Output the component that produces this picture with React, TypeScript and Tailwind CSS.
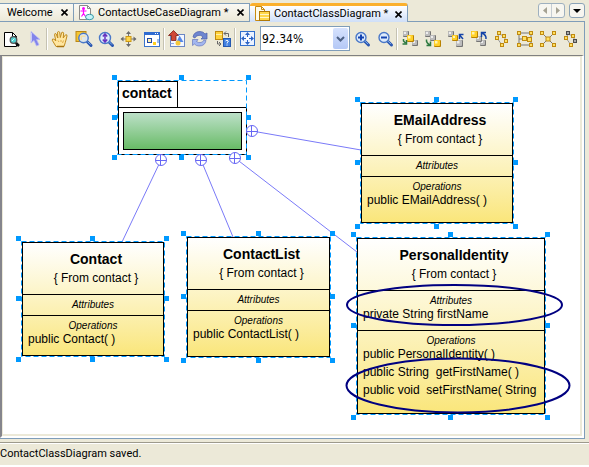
import React from "react";

const ui = "font-['Roboto','DejaVu_Sans',sans-serif] text-[11px]";
const HANDLE = "#0099ff";

/* ---------- toolbar icons ---------- */

function Icon({ children }: { children: React.ReactNode }) {
  return (
    <svg width="23" height="23" viewBox="0 0 23 23" fill="none" aria-hidden="true">
      {children}
    </svg>
  );
}

function Lens({ x, y, r = 5 }: { x: number; y: number; r?: number }) {
  return (
    <>
      <path d={`M${x + 4} ${y + 4}L${x + 7.5} ${y + 7.5}`} stroke="#2a56b0" strokeWidth="3" strokeLinecap="round" />
      <path d={`M${x + 4} ${y + 3.6}L${x + 7} ${y + 6.6}`} stroke="#7fb0ee" strokeWidth="1" />
      <circle cx={x} cy={y} r={r} fill="#dcebff" fillOpacity="0.9" stroke="#4a78c8" strokeWidth="1.4" />
    </>
  );
}

function Block({ x, y, gold = false, s = 7 }: { x: number; y: number; gold?: boolean; s?: number }) {
  return (
    <>
      <rect x={x} y={y} width={s} height={s} rx="1" fill={gold ? "#b98200" : "#747474"} />
      <rect x={x} y={y} width={s - 1} height={s - 1} rx="1" fill={gold ? "#ffd028" : "#bcbcbc"} />
      <rect x={x + 1} y={y + 1} width={s / 2 - 1} height={s / 2 - 1} fill={gold ? "#fff3b0" : "#ededed"} />
    </>
  );
}

function Dot({ x, y, gray = false }: { x: number; y: number; gray?: boolean }) {
  return (
    <rect x={x - 1.5} y={y - 1.5} width="3" height="3" fill={gray ? "#a8a8a8" : "#ffe060"} stroke={gray ? "#4c4c4c" : "#c08a10"} />
  );
}

function Chain({ gray = false }: { gray?: boolean }) {
  return (
    <Icon>
      <path d="M9 7L14 9L16 14L12 18L7 11Z" stroke="#9a9a9a" />
      <Dot x={9} y={6} gray={gray} />
      <Dot x={14} y={9} />
      <Dot x={7} y={11} />
      <Dot x={16} y={14} gray={gray} />
      <Dot x={12} y={18} />
    </Icon>
  );
}

const icons = {
  find: (
    <Icon>
      <path d="M4.500 5.500H12.500L16.500 9.500V19.500H4.500Z" fill="#fff" stroke="#000" />
      <path d="M12.500 5.500V9.500H16.500" stroke="#000" />
      <path d="M15.500 15.500L19 19" stroke="#111" strokeWidth="2.500" />
      <circle cx="13.500" cy="13" r="3.300" fill="#4fd0d0" stroke="#555" strokeWidth="1.300" />
      <path d="M12 14L14.500 11.500" stroke="#d8ffff" />
    </Icon>
  ),
  cursor: (
    <Icon>
      <path d="M8 4.500V16L11 13.500L13.500 19L16 17.800L13.500 12.500H17Z" fill="#8284ea" stroke="#b9b9f5" strokeWidth="0.800" />
      <path d="M8.500 6V14.500" stroke="#c9c9fa" />
    </Icon>
  ),
  hand: (
    <Icon>
      <path
        d="M8 19.500L4.300 13.300Q4 11.500 5.800 12L7.800 14L6.500 7.500Q6.800 5.700 8.200 7L9.800 11L9.500 5.200Q10.500 3.800 11.700 5.200L12.300 10.500L13.700 5.500Q15 4.500 15.700 6L15.200 11L17.500 7.800Q19.200 7.200 19 9L17.300 15.500L16 19.500Z"
        fill="#ffe6a0"
        stroke="#c08a1c"
      />
      <path d="M9 19.500H16" stroke="#a87410" strokeWidth="1.500" />
      <path d="M10 13.500L11 15M13 13V15M15.500 13.500L14.500 16" stroke="#e0ac48" />
    </Icon>
  ),
  zoomArea: (
    <Icon>
      <rect x="5" y="4.500" width="10" height="10" fill="#f4c430" stroke="#bb8716" />
      <Lens x={12.5} y={11} r={4.7} />
      <path d="M9.500 8.500H14.500V10H11V13H9.500Z" fill="#f6dda0" />
    </Icon>
  ),
  zoomFit: (
    <Icon>
      <Lens x={11} y={11} r={5.5} />
      <path d="M11 7V15M8.800 9.500L11 7L13.200 9.500M8.800 12.500L11 15L13.200 12.500" stroke="#6633c0" strokeWidth="1.500" />
    </Icon>
  ),
  pan: (
    <Icon>
      <path d="M11.500 5V19M4.500 12H18.500" stroke="#777" />
      <path d="M11.500 4L14 7H9ZM11.500 20L14 17H9ZM3.500 12L6.500 9.500V14.500ZM19.500 12L16.500 9.500V14.500Z" fill="#6b6b6b" />
      <rect x="9" y="9.500" width="5" height="5" fill="#ffd64a" stroke="#cf9a12" />
    </Icon>
  ),
  overview: (
    <Icon>
      <rect x="4.500" y="5.500" width="15" height="14" fill="#fff" stroke="#3a74cc" />
      <rect x="4" y="5" width="16" height="3" fill="#2f6bd0" />
      <path d="M15 6.500H16M17 6.500H18" stroke="#fff" />
      <rect x="7.500" y="11.500" width="4" height="4" fill="#fff2b0" stroke="#2048a8" />
      <rect x="13" y="15" width="3" height="3" fill="#ffd020" />
      <rect x="17" y="12" width="2" height="4" fill="#a0bce8" />
    </Icon>
  ),
  image: (
    <Icon>
      <rect x="5.500" y="7.500" width="14" height="12" fill="#f4f7ff" stroke="#6b87c4" />
      <path d="M14.500 8.500L18.500 15H11.500Z" fill="#5488e8" />
      <circle cx="13" cy="16" r="2.500" fill="#f5c83c" />
      <path d="M8.500 3.500L13.500 8.500H11V13.500H6.500V8.500H3.500Z" fill="#d04838" stroke="#7c2018" strokeWidth="0.800" />
      <path d="M5.500 16.500H9" stroke="#8eaae4" />
    </Icon>
  ),
  refresh: (
    <Icon>
      <path d="M5 10Q6 4.500 12 4.500Q15.500 4.500 17 7L19 6V12H13L15 10Q13 7.500 10 8.500Q7.500 9 7 11Z" fill="#6e86d0" stroke="#4a5ca8" strokeWidth="0.700" />
      <path d="M18 13.500Q17 19 11 19Q8 19 6.500 17L4.500 18.500V12.500H10L8.500 14.500Q10.500 16 13 15.500Q15 15 16 13Z" fill="#a3b7ef" stroke="#6879bd" strokeWidth="0.700" />
    </Icon>
  ),
  swap: (
    <Icon>
      <rect x="4.500" y="4.500" width="7" height="8" fill="#ffd23c" stroke="#c08a10" />
      <path d="M5 7.500H11" stroke="#fff0a8" />
      <path d="M13 6.500H17.500V10M15 4.500L13 6.500L15 8.500M10 17H6.500V14M8 15L10 17L8 19" stroke="#666" />
      <rect x="12.500" y="11.500" width="7" height="8" fill="#3f7fe0" stroke="#2458b0" />
      <path d="M14.500 14Q16 12.500 17.300 14Q17.300 15 16 15.800V16.500M16 17.500V18.500" stroke="#fff" />
    </Icon>
  ),
  fit: (
    <Icon>
      <rect x="4.500" y="4.500" width="14" height="14" fill="#eaf2ff" stroke="#3270cc" />
      <path d="M11.500 6V17M6 11.500H17" stroke="#2c64c4" />
      <path d="M11.500 5L14 8H9ZM11.500 18L14 15H9ZM5 11.500L8 9V14ZM18 11.500L15 9V14Z" fill="#2c64c4" />
      <rect x="10" y="10" width="3" height="3" fill="#fff" />
    </Icon>
  ),
  zoomIn: (
    <Icon>
      <Lens x={11} y={10.5} />
      <path d="M11 7.500V13.500M8 10.500H14" stroke="#1444b0" strokeWidth="2" />
    </Icon>
  ),
  zoomOut: (
    <Icon>
      <Lens x={11} y={10.5} />
      <path d="M8 10.500H14" stroke="#1444b0" strokeWidth="2" />
    </Icon>
  ),
  forward: (
    <Icon>
      <Block x={5} y={4} s={6} />
      <Block x={14} y={13} s={6} />
      <Block x={9} y={8} gold />
      <path d="M5.500 12V14L7.500 16M8.500 13V17H4.500" stroke="#2d7a40" strokeWidth="1.500" />
    </Icon>
  ),
  front: (
    <Icon>
      <Block x={4} y={4} s={6} />
      <Block x={9} y={8} s={6} />
      <Block x={13} y={13} gold />
      <path d="M5.500 12.500Q5 16 9 18M9.500 14.500V18.500H5.500" stroke="#2d7a40" strokeWidth="1.500" />
    </Icon>
  ),
  backward: (
    <Icon>
      <Block x={4} y={4} s={6} />
      <Block x={12} y={13} />
      <Block x={8} y={8} gold s={6} />
      <path d="M19 12L16 8.500M15.500 12V7.500H19.500" stroke="#1444a8" strokeWidth="1.500" />
    </Icon>
  ),
  back: (
    <Icon>
      <Block x={13} y={13} s={6} />
      <Block x={9} y={9} s={6} />
      <Block x={4} y={4} gold />
      <path d="M19 12Q19.500 8 15 6M14.500 10V5.500H19" stroke="#1444a8" strokeWidth="1.500" />
    </Icon>
  ),
  chain: <Chain />,
  orthogonal: (
    <Icon>
      <path d="M6 6H18V18H6ZM6 12H16" stroke="#777" />
      <Dot x={6} y={6} />
      <Dot x={18} y={6} />
      <Dot x={6} y={18} />
      <Dot x={18} y={18} />
      <rect x="9.500" y="9.500" width="4" height="4" fill="#ffe060" stroke="#c08a10" />
      <rect x="14.500" y="10.500" width="4" height="4" fill="#ffe060" stroke="#c08a10" />
    </Icon>
  ),
  star: (
    <Icon>
      <path d="M6 6L18 18M18 6L6 18" stroke="#777" />
      <Dot x={6} y={6} />
      <Dot x={18} y={6} />
      <Dot x={6} y={18} />
      <Dot x={18} y={18} />
      <rect x="10" y="10" width="4" height="4" fill="#ffe060" stroke="#c08a10" />
    </Icon>
  ),
  chainGray: <Chain gray />,
};

type IconName = keyof typeof icons;

function Tools({ items }: { items: [IconName, string][] }) {
  return (
    <>
      {items.map(([name, label]) => (
        <button key={name} type="button" aria-label={label} className="h-[23px] w-[23px] shrink-0">
          {icons[name]}
        </button>
      ))}
    </>
  );
}

function Separator() {
  return <div className="h-[22px] w-[2px] shrink-0 border-l border-[#c5c2b2] bg-white" />;
}

/* ---------- tabs ---------- */

function Tab({ title, icon, active = false, width }: { title: string; icon?: React.ReactNode; active?: boolean; width: string }) {
  return (
    <div
      className={`flex shrink-0 items-center border-r border-[#7f9db9] pl-1 ${width} ${
        active
          ? "rounded-t-[3px] border-t-[3px] border-t-[#fbb02c] bg-linear-to-b from-white to-[#cfdff8]"
          : "border-y bg-linear-to-b from-[#faf9f4] to-[#ece9d8]"
      }`}
    >
      {icon}
      <button type="button" className="pl-[3px] leading-[16px] whitespace-pre">
        {title}
      </button>
      <button type="button" aria-label={`Close ${title}`} className="mr-[3px] ml-auto p-0.5">
        <svg width="7" height="7" viewBox="0 0 7 7" aria-hidden="true">
          <path d="M0.500 0.500L6.500 6.500M6.500 0.500L0.500 6.500" stroke="#000" strokeWidth="1.600" />
        </svg>
      </button>
    </div>
  );
}

const useCaseIcon = (
  <svg width="17" height="16" viewBox="0 0 17 16" fill="none" aria-hidden="true">
    <path d="M1.500 0.500H9.500L12.500 3.500V14.500H1.500Z" fill="#fff" stroke="#8a8a8a" />
    <path d="M9.500 0.500V3.500H12.500" stroke="#8a8a8a" />
    <circle cx="5.500" cy="3.500" r="1.500" fill="#f0f" />
    <path d="M5.500 5V8.500M2.500 6H8.500M5.500 8.500L3.500 11.500M5.500 8.500L7.500 11.500" stroke="#f0f" strokeWidth="1.200" />
    <ellipse cx="11.500" cy="12" rx="4" ry="2.700" fill="#c4f4f8" stroke="#3a9aa8" />
  </svg>
);

const classIcon = (
  <svg width="17" height="16" viewBox="0 0 17 16" fill="none" aria-hidden="true">
    <path d="M1.500 0.500H7.500L10.500 3.500V14.500H1.500Z" fill="#fffbe8" stroke="#c88a10" />
    <path d="M7.500 0.500V3.500H10.500" stroke="#c88a10" />
    <rect x="5.500" y="5.500" width="10" height="9" fill="#ffd84a" stroke="#b07a08" />
    <path d="M6 8.500H15M6 11.500H15" stroke="#fff6c8" />
  </svg>
);

/* ---------- diagram ---------- */

type Box = { x: number; y: number; w: number; h: number };
type ClassNode = Box & { name: string; attributes: string[]; operations: string[] };

const classes: ClassNode[] = [
  { name: "EMailAddress", x: 358, y: 46, w: 152, h: 120, attributes: [], operations: ["public EMailAddress( )"] },
  { name: "Contact", x: 19, y: 185, w: 142, h: 114, attributes: [], operations: ["public Contact( )"] },
  { name: "ContactList", x: 184, y: 180, w: 143, h: 120, attributes: [], operations: ["public ContactList( )"] },
  {
    name: "PersonalIdentity",
    x: 354,
    y: 181,
    w: 188,
    h: 176,
    attributes: ["private String firstName"],
    operations: ["public PersonalIdentity( )", "public String  getFirstName( )", "public void  setFirstName( String"],
  },
];

const links = [
  { cx: 249, cy: 74, x: 358, y: 93 },
  { cx: 158, cy: 103, x: 119, y: 185 },
  { cx: 198, cy: 103, x: 230, y: 180 },
  { cx: 232, cy: 101, x: 354, y: 195 },
];

const packageBox: Box = { x: 115, y: 24, w: 128, h: 73 };

function Selection({ x, y, w, h }: Box) {
  const xs = [x - 6, Math.round(x + w / 2 - 3), x + w];
  const ys = [y - 6, Math.round(y + h / 2 - 3), y + h + 1];
  return (
    <g>
      <rect x={x - 0.5} y={y - 0.5} width={w + 1} height={h + 1} fill="none" stroke={HANDLE} strokeDasharray="5 3" />
      {xs.map((hx, i) =>
        ys.map((hy, j) => (i === 1 && j === 1 ? null : <rect key={`${i}${j}`} x={hx} y={hy} width="5" height="5" fill={HANDLE} />)),
      )}
    </g>
  );
}

function Compartment({ label, members }: { label: string; members: string[] }) {
  return (
    <div className={`border-t border-black pt-1 ${members.length > 0 ? "pb-[9px]" : "pb-1"}`}>
      <h3 className="text-center text-[10px] leading-[12px] italic">{label}</h3>
      {members.length > 0 && (
        <ul className="flex flex-col gap-1 pl-[5px]">
          {members.map((m) => (
            <li key={m} className="text-[12px] leading-[14px] whitespace-pre">
              {m}
            </li>
          ))}
        </ul>
      )}
    </div>
  );
}

function ClassCard({ node }: { node: ClassNode }) {
  return (
    <article
      className="absolute overflow-hidden border border-black bg-linear-to-b from-white to-[#fae67a]"
      style={{ left: node.x, top: node.y, width: node.w, height: node.h }}
    >
      <header className="h-[51px] pt-[6px] pl-[6px] text-center">
        <h2 className="text-[14px] leading-[20px] font-bold">{node.name}</h2>
        <p className="text-[12px] leading-[18px]">{"{ From contact }"}</p>
      </header>
      <Compartment label="Attributes" members={node.attributes} />
      <Compartment label="Operations" members={node.operations} />
    </article>
  );
}

function Diagram() {
  return (
    <main className="relative flex-1 overflow-hidden bg-white font-['Liberation_Sans',Arial,sans-serif]">
      <svg className="absolute top-0 left-0" width="578" height="377" fill="none" aria-hidden="true">
        {links.map((l) => (
          <path key={l.cx} d={`M${l.cx} ${l.cy}L${l.x} ${l.y}`} stroke="#7a7af8" />
        ))}
      </svg>
      <section className="absolute top-6 left-[115px] w-[129px]">
        <h2 className="h-[26px] w-[60px] border border-b-0 border-black bg-white pl-[3px] text-[14px] leading-[22px] font-bold">contact</h2>
        <div className="h-[48px] border border-black bg-white p-1">
          <div className="h-full border border-black bg-linear-to-b from-[#bce0c8] to-[#68bb66]" />
        </div>
      </section>
      {classes.map((c) => (
        <ClassCard key={c.name} node={c} />
      ))}
      <svg className="absolute top-0 left-0" width="578" height="377" fill="none" aria-hidden="true">
        <Selection {...packageBox} />
        {classes.map((c) => (
          <Selection key={c.name} {...c} />
        ))}
        {links.map((l) => (
          <g key={l.cx} stroke="#6666f4">
            <circle cx={l.cx} cy={l.cy} r="5.500" fill="#fff" />
            <path d={`M${l.cx - 5} ${l.cy + 0.5}H${l.cx + 5}M${l.cx - 0.5} ${l.cy - 5}V${l.cy + 5}`} />
          </g>
        ))}
        <g stroke="#000080" strokeWidth="2">
          <ellipse cx="451.500" cy="248" rx="107.500" ry="20" />
          <ellipse cx="455" cy="328.500" rx="111.500" ry="27" />
        </g>
      </svg>
    </main>
  );
}

/* ---------- window ---------- */

export default function App() {
  return (
    <div className={`flex min-h-screen flex-col bg-[#ece9d8] text-black ${ui}`}>
      <nav aria-label="Open diagrams" className="flex h-[22px] pt-[3px]">
        <Tab title="Welcome" width="w-[74px]" />
        <Tab title="ContactUseCaseDiagram *" icon={useCaseIcon} width="w-[176px]" />
        <Tab title="ContactClassDiagram *" icon={classIcon} active width="w-[158px]" />
        <div className="mr-[4px] flex flex-1 items-start justify-end gap-1 border-b border-[#7f9db9]">
          <div className="flex h-[15px] rounded-[3px] border border-[#9eb0bf] bg-[#f7f6f0]">
            <button type="button" aria-label="Previous tab" className="flex w-[13px] items-center justify-center border-r border-[#c6cdd2]">
              <svg width="4" height="7" viewBox="0 0 4 7" aria-hidden="true">
                <path d="M4 0V7L0 3.500Z" fill="#a5a293" />
              </svg>
            </button>
            <button type="button" aria-label="Next tab" className="flex w-[12px] items-center justify-center">
              <svg width="4" height="7" viewBox="0 0 4 7" aria-hidden="true">
                <path d="M0 0V7L4 3.500Z" fill="#a5a293" />
              </svg>
            </button>
          </div>
          <button type="button" aria-label="Tab list" className="flex h-[15px] w-[16px] items-center justify-center rounded-[3px] border border-[#8ba3b7] bg-[#f7f6f0]">
            <svg width="8" height="4" viewBox="0 0 8 4" aria-hidden="true">
              <path d="M0 0H8L4 4Z" fill="#000" />
            </svg>
          </button>
        </div>
      </nav>

      <div className="mr-[4px] flex flex-1 flex-col border-r border-b border-[#7f9db9]">
        <div role="toolbar" aria-label="Diagram tools" className="flex h-[33px] items-center overflow-hidden">
          <Tools items={[["find", "Find"], ["cursor", "Select"]]} />
          <Separator />
          <Tools
            items={[
              ["hand", "Hand"],
              ["zoomArea", "Zoom area"],
              ["zoomFit", "Interactive zoom"],
              ["pan", "Pan"],
              ["overview", "Overview"],
            ]}
          />
          <Separator />
          <Tools items={[["image", "Export image"], ["refresh", "Refresh"], ["swap", "Convert"]]} />
          <Separator />
          <Tools items={[["fit", "Fit in window"]]} />
          <div className="relative ml-px h-[25px] w-[90px] shrink-0">
            <select
              aria-label="Zoom level"
              defaultValue="92.34%"
              className="h-full w-full appearance-none border border-[#7f9db9] bg-white pl-px font-['DejaVu_Sans_Condensed','DejaVu_Sans',sans-serif] text-[12px]"
            >
              <option>92.34%</option>
              <option>100%</option>
            </select>
            <span className="pointer-events-none absolute top-[2px] right-[2px] flex h-[21px] w-[15px] items-center justify-center rounded-[2px] bg-linear-to-b from-[#d6e2fd] to-[#b4c8f6]">
              <svg width="9" height="6" viewBox="0 0 9 6" fill="none" aria-hidden="true">
                <path d="M1 1L4.500 4.500L8 1" stroke="#4d6185" strokeWidth="2" />
              </svg>
            </span>
          </div>
          <Tools items={[["zoomIn", "Zoom in"], ["zoomOut", "Zoom out"]]} />
          <Separator />
          <Tools
            items={[
              ["forward", "Bring forward"],
              ["front", "Bring to front"],
              ["backward", "Send backward"],
              ["back", "Send to back"],
              ["chain", "Hierarchical layout"],
              ["orthogonal", "Orthogonal layout"],
              ["star", "Star layout"],
              ["chainGray", "Layout selection"],
            ]}
          />
        </div>
        <div className="flex flex-1 border-t border-r-2 border-b-2 border-l-2 border-t-[#808080] border-r-white border-b-white border-l-[#85858c]">
          <div className="flex flex-1 border-t border-r-2 border-b-2 border-l border-[#ece9d8]">
            <Diagram />
          </div>
        </div>
      </div>

      <footer className="mt-[3px] border-t border-b-2 border-t-[#9d9a8c] border-b-white">
        <p className="border-t border-white pt-px pb-[3px] leading-[17px]">ContactClassDiagram saved.</p>
      </footer>
    </div>
  );
}
